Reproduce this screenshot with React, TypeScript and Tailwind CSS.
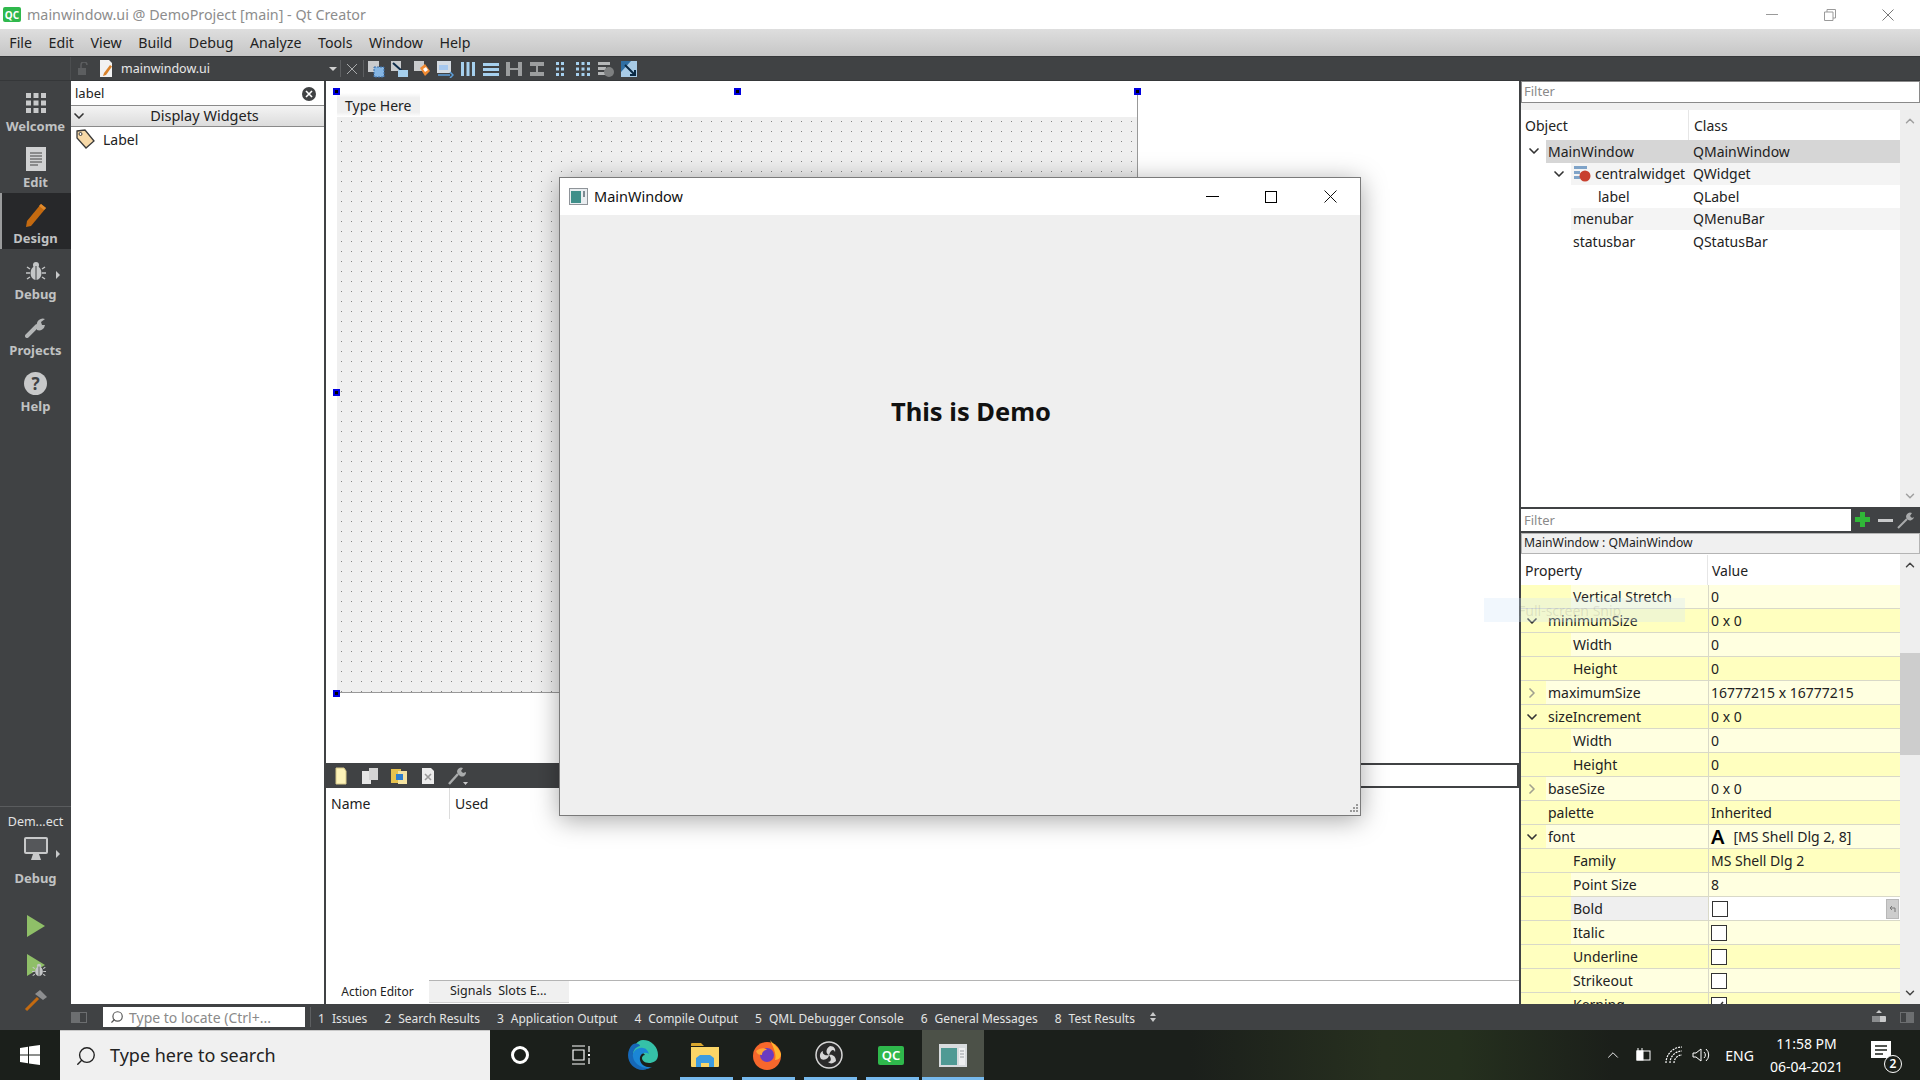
import { ChevronDown, ChevronRight, ChevronUp, Search } from "lucide-react";
import type { ReactNode } from "react";

const menus = ["File", "Edit", "View", "Build", "Debug", "Analyze", "Tools", "Window", "Help"];

const objectRows = [
  { name: "MainWindow", cls: "QMainWindow", left: 27, tone: "bg-[#d6d6d6]", from: 25, arrow: 5 },
  { name: "centralwidget", cls: "QWidget", left: 74, tone: "bg-[#f4f4f4]", from: 50, arrow: 30, icon: true },
  { name: "label", cls: "QLabel", left: 77, tone: "bg-white", from: 50 },
  { name: "menubar", cls: "QMenuBar", left: 52, tone: "bg-[#f4f4f4]", from: 50 },
  { name: "statusbar", cls: "QStatusBar", left: 52, tone: "bg-white", from: 50 },
];

type PropRow = {
  name: string;
  value?: string;
  child?: boolean;
  open?: boolean;
  closed?: boolean;
  check?: boolean;
  checked?: boolean;
  font?: boolean;
  edit?: boolean;
};

const propRows: PropRow[] = [
  { name: "Vertical Stretch", value: "0", child: true },
  { name: "minimumSize", value: "0 x 0", open: true },
  { name: "Width", value: "0", child: true },
  { name: "Height", value: "0", child: true },
  { name: "maximumSize", value: "16777215 x 16777215", closed: true },
  { name: "sizeIncrement", value: "0 x 0", open: true },
  { name: "Width", value: "0", child: true },
  { name: "Height", value: "0", child: true },
  { name: "baseSize", value: "0 x 0", closed: true },
  { name: "palette", value: "Inherited" },
  { name: "font", value: "[MS Shell Dlg 2, 8]", open: true, font: true },
  { name: "Family", value: "MS Shell Dlg 2", child: true },
  { name: "Point Size", value: "8", child: true },
  { name: "Bold", child: true, check: true, edit: true },
  { name: "Italic", child: true, check: true },
  { name: "Underline", child: true, check: true },
  { name: "Strikeout", child: true, check: true },
  { name: "Kerning", child: true, check: true, checked: true },
];

const outputs = [
  ["1", "Issues"],
  ["2", "Search Results"],
  ["3", "Application Output"],
  ["4", "Compile Output"],
  ["5", "QML Debugger Console"],
  ["6", "General Messages"],
  ["8", "Test Results"],
];

function Bug({ size = 20 }: { size?: number }) {
  return (
    <svg width={size} height={size} viewBox="0 0 20 20" fill="#c4c6c7">
      <ellipse cx="10" cy="12" rx="5.5" ry="7" />
      <circle cx="10" cy="4" r="3" />
      <path d="M10 5v14" stroke="#404244" strokeWidth="1" />
      <path d="M4 8 1 6M4 12H0M4 16l-3 2M16 8l3-2M16 12h4M16 16l3 2" stroke="#c4c6c7" strokeWidth="1.5" />
    </svg>
  );
}

function NavItem({ label, active, children }: { label: string; active?: boolean; children: ReactNode }) {
  return (
    <div className={`relative flex h-14 flex-col items-center ${active ? "bg-[#27282a]" : ""}`}>
      {active && <div className="absolute inset-y-0 left-0 w-[2px] bg-[#9a9b9c]" />}
      <div className="flex h-[36px] items-center justify-center pt-[8px]">{children}</div>
      <span className="text-[13px] leading-[18px] font-bold text-[#c0c2c3]">{label}</span>
    </div>
  );
}

function Sidebar() {
  return (
    <div className="flex w-[71px] shrink-0 flex-col bg-[#404244]">
      <NavItem label="Welcome">
        <svg width="20" height="20" viewBox="0 0 20 20" fill="#c8c9ca">
          <path d="M0 0h5v5H0zM7.5 0h5v5h-5zM15 0h5v5h-5zM0 7.5h5v5H0zM7.5 7.5h5v5h-5zM15 7.5h5v5h-5zM0 15h5v5H0zM7.5 15h5v5h-5zM15 15h5v5h-5z" />
        </svg>
      </NavItem>
      <NavItem label="Edit">
        <svg width="20" height="24" viewBox="0 0 20 24">
          <rect width="20" height="24" fill="#d0d1d2" />
          <path d="M4 6h12M4 9h12M4 12h12M4 15h12M4 18h8" stroke="#444" strokeWidth="1" />
        </svg>
      </NavItem>
      <NavItem label="Design" active>
        <svg width="22" height="26" viewBox="0 0 22 26">
          <path d="M16 2 21 6 6 24 1 25 2 19Z" fill="#c46a10" />
          <path d="M16 2 21 6 19 8 14 4Z" fill="#e08a2c" />
        </svg>
      </NavItem>
      <NavItem label="Debug">
        <div className="relative">
          <Bug />
          <div className="absolute top-[10px] left-[30px] h-0 w-0 border-y-[4px] border-l-[4px] border-y-transparent border-l-[#c8c9ca]" />
        </div>
      </NavItem>
      <NavItem label="Projects">
        <svg width="22" height="22" viewBox="0 0 22 22">
          <path d="M2 20 12 10" stroke="#b4b6b7" strokeWidth="4" strokeLinecap="round" />
          <path d="M12 10a6 6 0 0 1 8-7l-4 3 1 3 3 0a6 6 0 0 1-8 5Z" fill="#b4b6b7" />
        </svg>
      </NavItem>
      <NavItem label="Help">
        <div className="flex h-[23px] w-[23px] items-center justify-center rounded-full bg-[#c8c9ca] text-[17px] leading-none font-bold text-[#404244]">?</div>
      </NavItem>

      <div className="mt-auto border-t border-[#5a5c5e] pt-[6px] pb-[18px]">
        <div className="text-center text-[12.5px] leading-[18px] text-[#e2e3e3]">Dem...ect</div>
        <div className="relative mt-[6px] flex justify-center">
          <svg width="24" height="25" viewBox="0 0 24 25">
            <rect x="0" y="0" width="24" height="17" rx="2" fill="#c8c9ca" />
            <rect x="2" y="2" width="20" height="13" fill="#55575a" />
            <path d="M9 17h6l2 6H7Z" fill="#c8c9ca" />
          </svg>
          <div className="absolute top-[13px] left-[56px] h-0 w-0 border-y-[4px] border-l-[4px] border-y-transparent border-l-[#c8c9ca]" />
        </div>
        <div className="mt-[7px] text-center text-[13px] leading-[18px] font-bold text-[#c0c2c3]">Debug</div>
        <div className="mt-[27px] flex justify-center">
          <svg width="20" height="24" viewBox="0 0 20 24"><path d="M1 1 19 12 1 23Z" fill="#8fbf68" /></svg>
        </div>
        <div className="relative mt-[15px] flex justify-center">
          <svg width="20" height="24" viewBox="0 0 20 24"><path d="M1 1 19 12 1 23Z" fill="#8fbf68" /></svg>
          <div className="absolute top-[10px] left-[32px]"><Bug size={14} /></div>
        </div>
        <div className="mt-[11px] flex justify-center">
          <svg width="24" height="24" viewBox="0 0 24 24">
            <path d="M2 22 14 10" stroke="#c46a10" strokeWidth="3" />
            <path d="M11 6 16 2 23 9 19 12Z" fill="#8d8e90" />
          </svg>
        </div>
      </div>
    </div>
  );
}

function ToolIcon({ kind }: { kind: number }) {
  const box = "#c9cbcd";
  const blue = "#a6d0ee";
  return (
    <div className="flex w-[23px] shrink-0 justify-center">
      <svg width="18" height="18" viewBox="0 0 18 18">
        {kind === 0 && (
          <>
            <rect x="1" y="1" width="11" height="11" fill={box} />
            <rect x="7" y="7" width="10" height="10" fill="#85b6e4" stroke="#3d6fa8" strokeDasharray="2 1" />
          </>
        )}
        {kind === 1 && (
          <>
            <rect x="1" y="1" width="10" height="10" fill={box} />
            <path d="M3 3 12 11" stroke="#0d2c4a" strokeWidth="2" />
            <rect x="8" y="10" width="10" height="7" fill={blue} />
          </>
        )}
        {kind === 2 && (
          <>
            <rect x="1" y="1" width="10" height="10" fill={box} />
            <path d="M7 8 12 4 17 11 12 16Z" fill="#f28b32" />
            <path d="M10 9l3-2 2 3-3 2Z" fill="#fff" />
          </>
        )}
        {kind === 3 && (
          <>
            <rect x="1" y="1" width="14" height="12" fill="#d4dbe2" />
            <rect x="3" y="5" width="9" height="5" fill="#a6c8ee" />
            <path d="M2 15h12M14 12l3 3-3 3" stroke="#5da0dc" strokeWidth="1.5" fill="none" />
          </>
        )}
        {kind === 4 && <path d="M2 2h3v14H2zM7.5 2h3v14h-3zM13 2h3v14h-3z" fill={blue} />}
        {kind === 5 && <path d="M1 3h16v3H1zM1 8h16v3H1zM1 13h16v3H1z" fill={blue} />}
        {kind === 6 && <path d="M1 2h4v14H1zM13 2h4v14h-4zM5 8h8v2H5z" fill="#9c9e9f" />}
        {kind === 7 && <path d="M2 2h14v4H2zM2 12h14v4H2zM8 6h2v6H8z" fill="#9c9e9f" />}
        {kind === 8 && <path d="M5 2h3v3H5zM10 2h3v3h-3zM5 7.5h3v3H5zM10 7.5h3v3h-3zM5 13h3v3H5zM10 13h3v3h-3z" fill={blue} />}
        {kind === 9 && <path d="M2 2h3v3H2zM7.5 2h3v3h-3zM13 2h3v3h-3zM2 7.5h3v3H2zM7.5 7.5h3v3h-3zM13 7.5h3v3h-3zM2 13h3v3H2zM7.5 13h3v3h-3zM13 13h3v3h-3z" fill={blue} />}
        {kind === 10 && (
          <>
            <path d="M1 2h12v3H1zM1 7h8v3H1zM1 12h8v3H1z" fill="#b5b7b8" />
            <circle cx="12" cy="12" r="5" fill="#7e8081" />
          </>
        )}
        {kind === 11 && (
          <>
            <rect x="1" y="1" width="16" height="16" fill="#a8cbe6" />
            <path d="M1 1h10L1 12Z" fill="#2f6fa4" />
            <path d="M5 5 15 15M15 10v5h-5" stroke="#0b2a44" strokeWidth="2" fill="none" />
          </>
        )}
      </svg>
    </div>
  );
}

function Toolbar() {
  return (
    <div className="flex h-[25px] shrink-0 items-center border-y border-[#353739] bg-[#404244]">
      <div className="h-full w-[71px] shrink-0 border-r border-[#4c4e50]" />
      <div className="flex w-[24px] justify-center">
        <svg width="12" height="14" viewBox="0 0 12 14">
          <rect x="1" y="6" width="8" height="7" fill="#5c5e60" />
          <path d="M4 6V3a3 3 0 0 1 6 0" stroke="#5c5e60" strokeWidth="1.5" fill="none" />
        </svg>
      </div>
      <svg width="14" height="17" viewBox="0 0 14 17" className="ml-[4px]">
        <path d="M1 0h9l3 3v14H1Z" fill="#f2f2f2" />
        <path d="M5 13 11 5l2 1.5L7 15l-3 1Z" fill="#d9822b" />
      </svg>
      <span className="mt-[2px] ml-[8px] text-[12.5px] leading-none text-[#e8e8e8]">mainwindow.ui</span>
      <div className="ml-[119px] h-0 w-0 border-x-[4px] border-t-[4px] border-x-transparent border-t-[#d0d0d0]" />
      <div className="ml-[3px] h-[17px] w-px bg-[#5d5f61]" />
      <svg width="12" height="12" viewBox="0 0 12 12" className="ml-[5px]">
        <path d="M1 1l10 10M11 1 1 11" stroke="#a9abac" strokeWidth="1" />
      </svg>
      <div className="ml-[5px] h-[17px] w-px bg-[#5d5f61]" />
      <div className="flex">
        {[0, 1, 2, 3, 4, 5, 6, 7, 8, 9, 10, 11].map((kind) => (
          <ToolIcon key={kind} kind={kind} />
        ))}
      </div>
    </div>
  );
}

function WidgetBox() {
  return (
    <div className="flex w-[255px] shrink-0 flex-col border-r-2 border-[#404244] bg-white">
      <div className="mt-[2px] flex h-[22px] items-center justify-between pr-[8px] pl-[4px]">
        <span className="text-[13px] text-[#222]">label</span>
        <div className="flex h-[14px] w-[14px] items-center justify-center rounded-full bg-[#404244]">
          <svg width="8" height="8" viewBox="0 0 8 8"><path d="M1 1l6 6M7 1 1 7" stroke="#fff" strokeWidth="1.6" /></svg>
        </div>
      </div>
      <div className="relative flex h-[22px] items-center justify-center border-y border-[#8a8a8a] bg-[linear-gradient(#f4f4f4,#dcdcdc)] pl-[14px] text-[14.5px] text-[#222]">
        <ChevronDown className="absolute left-[0px] text-[#333]" size={16} strokeWidth={2.5} />
        Display Widgets
      </div>
      <div className="flex h-[24px] items-center pl-[3px] text-[14px] text-[#222]">
        <svg width="22" height="22" viewBox="0 0 22 22">
          <path d="M3 3 11 2 20 13 12 20 3 10Z" fill="#f7d9a8" stroke="#3a3a3a" strokeWidth="1.3" />
          <circle cx="6.5" cy="6" r="1.5" fill="#fff" stroke="#3a3a3a" />
        </svg>
        <span className="ml-[7px]">Label</span>
      </div>
    </div>
  );
}

function Handle({ className }: { className: string }) {
  return <div className={`absolute h-[7px] w-[7px] border-2 border-[#0000e0] bg-black ${className}`} />;
}

function ActionIcons() {
  return (
    <div className="flex items-center gap-[9px] pl-[5px]">
      <svg width="20" height="20" viewBox="0 0 20 20"><path d="M5 2h8l2 3v13H5Z" fill="#fdf3b8" stroke="#d6c88a" /></svg>
      <svg width="20" height="20" viewBox="0 0 20 20"><path d="M2 5h9v13H2Z" fill="#e6e6e6" /><path d="M9 2h9v12H9Z" fill="#d4d4d4" /></svg>
      <svg width="20" height="20" viewBox="0 0 20 20"><path d="M2 3h10v14H2Z" fill="#e8c34e" /><path d="M9 5h9v13H9Z" fill="#f4e3a1" /><rect x="7" y="8" width="7" height="6" fill="#2f7fd0" /></svg>
      <svg width="20" height="20" viewBox="0 0 20 20"><path d="M4 2h9l3 3v13H4Z" fill="#ececec" /><path d="M7 8l6 6M13 8l-6 6" stroke="#999" strokeWidth="1.6" /></svg>
      <svg width="22" height="20" viewBox="0 0 22 20">
        <path d="M2 18 11 8" stroke="#a9abac" strokeWidth="2.5" />
        <path d="M11 8a4 4 0 0 1 5-6l-2 3 2 2 3-1a4 4 0 0 1-6 4Z" fill="#a9abac" />
        <path d="M16 16h5l-2.5 3Z" fill="#c8c9ca" />
      </svg>
    </div>
  );
}

function Designer() {
  return (
    <div className="relative flex min-w-0 flex-1 flex-col bg-white">
      <div className="relative h-[682px] shrink-0 pt-[12px] pl-[11px]">
        <div className="h-[600px] w-[801px] border-r border-b border-[#999]">
          <div className="flex h-[24px] w-[83px] items-center bg-[linear-gradient(#ffffff,#efefef_20%,#efefef_80%,#ffffff)] pl-[8px] text-[14px] text-[#222]">Type Here</div>
          <div className="h-[575px] bg-[#efefef] bg-[radial-gradient(circle_at_4.5px_4.5px,#858585_0.5px,transparent_0.6px)] bg-[length:10px_10px]" />
        </div>
        <Handle className="top-[7px] left-[7px]" />
        <Handle className="top-[7px] left-[408px]" />
        <Handle className="top-[7px] left-[808px]" />
        <Handle className="top-[308px] left-[7px]" />
        <Handle className="top-[609px] left-[7px]" />
      </div>
      <div className="flex h-[25px] shrink-0 items-center bg-[#404244]">
        <ActionIcons />
        <div className="ml-auto h-full w-[400px] border-y-2 border-r-2 border-[#404244] bg-white" />
      </div>
      <div className="flex h-[31px] shrink-0 text-[14px] text-[#222]">
        <div className="flex w-[124px] items-center border-r border-[#dcdcdc] pl-[5px]">Name</div>
        <div className="flex items-center pl-[5px]">Used</div>
      </div>
      <div className="flex-1" />
      <div className="flex h-[24px] shrink-0 border-t border-[#b4b4b4] text-[13px] text-[#222]">
        <div className="-mt-px flex w-[103px] items-center justify-center bg-white text-[12px]">Action Editor</div>
        <div className="flex h-[22px] w-[140px] items-center border-b border-[#d0d0d0] bg-[#f0f0f0] pl-[21px] text-[12.5px]">Signals&nbsp;&nbsp;Slots E...</div>
      </div>
    </div>
  );
}

function FloatingWindow() {
  return (
    <div className="absolute top-[96px] left-[488px] flex h-[639px] w-[802px] flex-col border border-[#7a7a7a] bg-[#efefef] shadow-[0_4px_24px_rgba(0,0,0,0.35)]">
      <div className="flex h-[37px] shrink-0 items-center bg-white pl-[9px]">
        <svg width="19" height="17" viewBox="0 0 19 17">
          <rect x="0.5" y="0.5" width="18" height="16" fill="#e9edf0" stroke="#8f9499" />
          <rect x="2" y="3" width="10" height="12" fill="#3f8f8a" />
          <rect x="14" y="3" width="2" height="6" fill="#7d8a92" />
        </svg>
        <span className="ml-[6px] text-[14.5px] text-[#111]">MainWindow</span>
        <div className="ml-auto flex items-center">
          <div className="flex w-[58px] justify-center pr-[6px]"><div className="h-px w-[13px] bg-black" /></div>
          <div className="flex w-[58px] justify-center pr-[5px]"><div className="h-[12px] w-[12px] border border-black" /></div>
          <div className="flex w-[58px] justify-center pr-[2px]">
            <svg width="13" height="13" viewBox="0 0 13 13"><path d="M0.5 0.5l12 12M12.5 0.5l-12 12" stroke="#111" strokeWidth="1" /></svg>
          </div>
        </div>
      </div>
      <div className="relative flex flex-1 items-center justify-center pb-[208px] pl-[22px]">
        <span className="text-[25.5px] font-bold text-[#111]">This is Demo</span>
        <svg width="10" height="10" viewBox="0 0 10 10" className="absolute right-[1px] bottom-[1px]" fill="#9a9a9a">
          <path d="M7 0h2v2H7zM4 3h2v2H4zM7 3h2v2H7zM1 6h2v2H1zM4 6h2v2H4zM7 6h2v2H7z" />
        </svg>
      </div>
    </div>
  );
}

function ScrollTrack({ thumb }: { thumb?: boolean }) {
  return (
    <div className="relative flex w-[20px] shrink-0 flex-col items-center justify-between bg-[#eeeeee] py-[4px] text-[#a0a0a0]">
      <ChevronUp size={14} strokeWidth={2.5} className={thumb ? "text-[#444]" : ""} />
      {thumb && <div className="absolute top-[99px] h-[102px] w-full bg-[#cdcdcd]" />}
      <ChevronDown size={14} strokeWidth={2.5} className={thumb ? "text-[#444]" : ""} />
    </div>
  );
}

function ObjectInspector() {
  return (
    <div className="flex h-[426px] shrink-0 flex-col">
      <div className="flex h-[22px] shrink-0 items-center border border-[#8a8a8a] bg-white pl-[2px] text-[13px] text-[#8a8a8a]">Filter</div>
      <div className="h-[7px] shrink-0 bg-[#f0f0f0]" />
      <div className="flex min-h-0 flex-1">
        <div className="flex-1 bg-white text-[14px] text-[#222]">
          <div className="flex h-[30px] items-center">
            <div className="flex h-full w-[168px] items-center border-r border-[#e6e6e6] pl-[4px]">Object</div>
            <div className="pl-[5px]">Class</div>
          </div>
          {objectRows.map((row) => (
            <div key={row.name} className="relative flex h-[22.5px] items-center">
              <div className={`absolute inset-y-0 right-0 ${row.tone}`} style={{ left: row.from }} />
              {row.arrow !== undefined && (
                <ChevronDown className="absolute text-[#333]" style={{ left: row.arrow }} size={16} strokeWidth={2.5} />
              )}
              {row.icon && (
                <svg width="17" height="17" viewBox="0 0 17 17" className="absolute left-[53px]">
                  <path d="M0 1h13v3H0zM0 6h6v3H0zM0 11h6v3H0z" fill="#7fa3c8" />
                  <circle cx="11" cy="11" r="5.5" fill="#c8402f" />
                </svg>
              )}
              <span className="absolute" style={{ left: row.left }}>{row.name}</span>
              <span className="absolute left-[172px]">{row.cls}</span>
            </div>
          ))}
        </div>
        <ScrollTrack />
      </div>
    </div>
  );
}

function PropertyRow({ row, index }: { row: PropRow; index: number }) {
  const light = index % 2 === 0;
  const base = row.edit ? "bg-white" : light ? "bg-[#ffffe0]" : "bg-[#ffffbf]";
  const name = row.edit ? "bg-[#efefef]" : base;
  return (
    <div className="flex h-6 shrink-0 border-b border-[#d9d9c8] text-[14px] text-[#222]">
      <div className="flex w-[187px] shrink-0 bg-[#ffffbf]">
        <div className={`flex h-full shrink-0 items-center ${row.child ? "w-[50px]" : "w-[25px]"}`}>
          {row.open && <ChevronDown className="ml-[3px] text-[#333]" size={16} strokeWidth={2.5} />}
          {row.closed && <ChevronRight className="ml-[3px] text-[#a0a090]" size={16} strokeWidth={2.5} />}
        </div>
        <div className={`flex min-w-0 flex-1 items-center pl-[2px] ${name}`}>{row.name}</div>
      </div>
      <div className={`relative flex flex-1 items-center border-l border-[#d9d9c8] pl-[2px] ${base}`}>
        {row.font && <span className="mr-[9px] text-[20px] leading-none font-semibold text-black">A</span>}
        {row.check ? (
          <div className={`flex h-4 w-4 items-center justify-center border border-[#333] bg-white ${row.edit ? "ml-px" : ""}`}>
            {row.checked && (
              <svg width="12" height="12" viewBox="0 0 12 12"><path d="M2 6l3 3 5-6" stroke="#333" strokeWidth="1.5" fill="none" /></svg>
            )}
          </div>
        ) : (
          row.value
        )}
        {row.edit && (
          <div className="absolute right-[1px] flex h-5 w-[13px] items-center justify-center border border-[#b8b8b8] bg-[#cdcdcd] text-[#777]">
            <svg width="8" height="8" viewBox="0 0 8 8"><path d="M1 3h5v4M1 3l2-2M1 3l2 2" stroke="#777" fill="none" /></svg>
          </div>
        )}
      </div>
    </div>
  );
}

function PropertyEditor() {
  return (
    <div className="flex min-h-0 flex-1 flex-col overflow-hidden">
      <div className="flex h-[26px] shrink-0 items-center border-y-2 border-[#404244] bg-[#404244]">
        <div className="flex h-full w-[330px] items-center bg-white pt-[2px] pl-[3px] text-[13px] text-[#8a8a8a]">Filter</div>
        <svg width="18" height="18" viewBox="0 0 18 18" className="ml-[3px]">
          <path d="M6 1h5v5h5v5h-5v5H6v-5H1V6h5Z" fill="#30b838" />
        </svg>
        <div className="ml-[6px] h-[3px] w-[15px] bg-[#c8c9ca]" />
        <svg width="18" height="18" viewBox="0 0 18 18" className="ml-[4px]">
          <path d="M1 17 10 8" stroke="#a9abac" strokeWidth="2" />
          <path d="M10 8a4 4 0 0 1 5-6l-2 3 2 2 2-1a4 4 0 0 1-7 2Z" fill="#a9abac" />
        </svg>
      </div>
      <div className="flex h-[21px] shrink-0 items-center border border-[#b4b4b4] bg-[#f0f0f0] pl-[2px] text-[12.2px] text-[#222]">MainWindow : QMainWindow</div>
      <div className="flex min-h-0 flex-1">
        <div className="flex flex-1 flex-col overflow-hidden bg-white">
          <div className="flex h-[31px] shrink-0 pt-px text-[14px] text-[#222]">
            <div className="flex w-[187px] items-center border-r border-[#e6e6e6] pl-[4px]">Property</div>
            <div className="flex items-center pl-[4px]">Value</div>
          </div>
          {propRows.map((row, i) => (
            <PropertyRow key={`${row.name}-${i}`} row={row} index={i} />
          ))}
        </div>
        <ScrollTrack thumb />
      </div>
    </div>
  );
}

function StatusBar() {
  return (
    <div className="flex h-[26px] shrink-0 items-center bg-[#404244] text-[12px] text-[#e4e5e5]">
      <div className="flex w-[32px] shrink-0 justify-end pr-[16px]">
        <div className="flex h-[11px] w-[16px] border border-[#6c6e70]"><div className="w-[8px] bg-[#6c6e70]" /></div>
      </div>
      <div className="flex h-[20px] w-[202px] shrink-0 items-center bg-white pl-[7px] text-[#8a8a8a]">
        <Search size={14} className="mr-[5px] -scale-x-100 text-[#555]" />
        <span className="text-[14px]">Type to locate (Ctrl+...</span>
      </div>
      <div className="ml-[5px] h-[20px] w-px bg-[#5d5f61]" />
      <div className="ml-[7px] flex gap-[17px] pt-[3px]">
        {outputs.map(([num, label]) => (
          <span key={num} className="flex gap-[7px] whitespace-nowrap">
            <span>{num}</span>
            <span>{label}</span>
          </span>
        ))}
      </div>
      <div className="ml-[15px] flex flex-col gap-[2px]">
        <div className="h-0 w-0 border-x-[3px] border-b-[4px] border-x-transparent border-b-[#c8c9ca]" />
        <div className="h-0 w-0 border-x-[3px] border-t-[4px] border-x-transparent border-t-[#c8c9ca]" />
      </div>
      <div className="mr-[6px] ml-auto flex items-center gap-[13px]">
        <svg width="16" height="14" viewBox="0 0 16 14">
          <path d="M8 0l3 3H5Z" fill="#c8c9ca" />
          <rect x="1" y="6" width="14" height="6" rx="1" fill="#c8c9ca" />
          <rect x="1" y="6" width="8" height="6" fill="#8a8c8e" />
        </svg>
        <div className="flex h-[11px] w-[14px] justify-end border border-[#6c6e70]"><div className="w-[7px] bg-[#6c6e70]" /></div>
      </div>
    </div>
  );
}

function TaskCell({ children, width = "w-[62px]", open, active }: { children: ReactNode; width?: string; open?: boolean; active?: boolean }) {
  return (
    <div className={`relative flex h-full shrink-0 items-center justify-center ${width} ${active ? "bg-[#4c5148]" : ""}`}>
      {children}
      {open && <div className={`absolute bottom-0 h-[3px] bg-[#76b9ed] ${active ? "right-0 left-0" : "right-[3px] left-[6px]"}`} />}
    </div>
  );
}

function Taskbar() {
  return (
    <div className="flex h-[50px] shrink-0 items-center bg-[linear-gradient(90deg,#1b1f1b_0%,#1b1f1b_62%,#27301f_72%,#25301e_76%,#1b1f1a_84%)] text-white">
      <div className="flex h-full w-[60px] shrink-0 items-center justify-center">
        <svg width="20" height="20" viewBox="0 0 20 20" fill="#fff">
          <path d="M0 3l8-1.2V9.5H0ZM9 1.6 20 0v9.5H9ZM0 10.5h8v7.7L0 17ZM9 10.5h11V20L9 18.4Z" />
        </svg>
      </div>
      <div className="flex h-full w-[430px] shrink-0 items-center border-t border-[#c8c8c8] bg-[#f0f0f0] pl-[15px] text-[#222]">
        <Search size={22} strokeWidth={1.5} className="-scale-x-100" />
        <span className="ml-[13px] text-[18px]">Type here to search</span>
      </div>
      <TaskCell width="w-[60px]">
        <div className="h-[18px] w-[18px] rounded-full border-[3px] border-white" />
      </TaskCell>
      <TaskCell>
        <svg width="20" height="20" viewBox="0 0 20 20" fill="none" stroke="#fff" strokeWidth="1.2">
          <path d="M1 1h13M1 19h13M2 5h11v10H2zM18 1v6M18 13v6" />
          <rect x="17" y="9" width="2" height="2" fill="#fff" stroke="none" />
        </svg>
      </TaskCell>
      <TaskCell>
        <svg width="30" height="30" viewBox="0 0 30 30">
          <path d="M15 0a15 15 0 0 1 15 15c0 6-5 8-9 8-5 0-7-3-7-5 0-1 1-3 3-3-3-4-10-3-13 3C5 6 9 0 15 0Z" fill="#35c1a8" />
          <path d="M4 18c0-7 6-11 11-10 3 0 5 3 6 6-4-3-10 0-9 6 1 5 6 8 12 7-8 5-20-1-20-9Z" fill="#1b86d6" />
          <path d="M0 15c0-4 2-8 4-10 4-3 8-1 8 1-5 1-8 6-7 11 1 6 7 11 15 11-1 1-3 2-5 2C6 30 0 23 0 15Z" fill="#1668b8" />
        </svg>
      </TaskCell>
      <TaskCell open>
        <svg width="28" height="24" viewBox="0 0 28 24">
          <path d="M0 1a1 1 0 0 1 1-1h9l3 3H0Z" fill="#d9a62e" />
          <path d="M0 4h28v19a1 1 0 0 1-1 1H1a1 1 0 0 1-1-1Z" fill="#fbd567" />
          <path d="M5 24V15l4-3h10l4 3v9h-5v-4h-8v4Z" fill="#3d9be0" />
        </svg>
      </TaskCell>
      <TaskCell open>
        <svg width="28" height="30" viewBox="0 0 28 30">
          <circle cx="14" cy="16" r="14" fill="#f7672c" />
          <path d="M17 0c3 4 9 7 11 14 0 3-2 6-6 6 2-5-2-14-5-20Z" fill="#ffb52e" />
          <circle cx="14" cy="15" r="7" fill="#6a3cc0" />
          <path d="M3 11c3-3 9-4 11-1-3 0-5 2-5 5-3 0-5-1-6-4Z" fill="#ffa436" />
        </svg>
      </TaskCell>
      <TaskCell open>
        <svg width="28" height="28" viewBox="0 0 28 28" fill="none">
          <circle cx="14" cy="14" r="13" stroke="#d6d6d6" strokeWidth="1.5" fill="#2a2a2a" />
          <path d="M14 14c-3-1-4-6 1-9 4 0 6 3 5 6-1-3-4-3-6 3ZM14 14c3-1 7 1 7 6-3 3-6 3-8 1 3 0 4-3 1-7ZM14 14c0 3-4 6-8 4-2-3-1-7 2-8-1 3 2 5 6 4Z" fill="#d6d6d6" />
        </svg>
      </TaskCell>
      <TaskCell open>
        <div className="flex h-[19px] w-[26px] items-center justify-center rounded-[2px] bg-[#2fb84c] text-[13px] leading-none font-semibold text-white">QC</div>
      </TaskCell>
      <TaskCell open active>
        <svg width="28" height="23" viewBox="0 0 28 23">
          <rect width="28" height="23" fill="#d8dcde" />
          <rect x="2" y="4" width="16" height="17" fill="#4f9a94" />
          <rect x="20" y="4" width="6" height="17" fill="#eef0f1" />
          <path d="M21 7h4M21 10h4M21 13h4" stroke="#9aa0a4" />
        </svg>
      </TaskCell>
      <div className="ml-auto flex items-center pr-[18px]">
        <ChevronUp size={18} strokeWidth={1.2} className="mr-[12px]" />
        <svg width="18" height="16" viewBox="0 0 18 16" className="mr-[13px]" fill="none" stroke="#fff">
          <rect x="3" y="4" width="13" height="9" />
          <rect x="3" y="4" width="6" height="9" fill="#fff" />
          <path d="M4 1v3M8 1v3" />
        </svg>
        <svg width="18" height="18" viewBox="0 0 18 18" className="mr-[9px]" fill="none" stroke="#fff" strokeWidth="1.2">
          <path d="M1 17A16 16 0 0 1 17 1M5 17A12 12 0 0 1 17 5M9 17a8 8 0 0 1 8-8" strokeDasharray="2 1" />
        </svg>
        <svg width="18" height="18" viewBox="0 0 18 18" className="mr-[15px]" fill="none" stroke="#fff">
          <path d="M1 7h3l5-4v12l-5-4H1ZM12 6a4 4 0 0 1 0 6M14 3a8 8 0 0 1 0 12" />
        </svg>
        <span className="mr-[16px] text-[14px]">ENG</span>
        <div className="mr-[27px] flex flex-col items-center text-[14px] leading-[23px]">
          <span>11:58 PM</span>
          <span>06-04-2021</span>
        </div>
        <div className="relative mr-[4px] h-[30px] w-[28px]">
          <svg width="24" height="24" viewBox="0 0 24 24" fill="#fff" className="absolute top-0 left-0">
            <path d="M1 1h20v17H1Z" />
            <path d="M5 6h12M5 10h12M5 14h8" stroke="#1b1f1a" strokeWidth="1.5" />
          </svg>
          <div className="absolute right-[-4px] bottom-[-3px] flex h-[18px] w-[18px] items-center justify-center rounded-full border border-white bg-[#1b1f1a] text-[12px] leading-none font-semibold">2</div>
        </div>
      </div>
    </div>
  );
}

export default function App() {
  return (
    <div className="flex h-screen w-screen flex-col overflow-hidden bg-white [font-family:'Noto_Sans','Open_Sans',sans-serif]">
      <div className="flex h-[29px] shrink-0 items-center bg-white">
        <div className="ml-[3px] flex h-[15px] w-[18px] items-center justify-center rounded-[2px] bg-[#2fb84c] text-[10px] leading-none font-bold text-white">QC</div>
        <span className="ml-[6px] text-[14.3px] text-[#8d8d8d]">mainwindow.ui @ DemoProject [main] - Qt Creator</span>
        <div className="ml-auto flex items-center pr-[3px] text-[#9a9a9a]">
          <div className="flex w-[58px] justify-center"><div className="h-px w-[12px] bg-[#9a9a9a]" /></div>
          <div className="flex w-[58px] justify-center">
            <svg width="12" height="12" viewBox="0 0 12 12" fill="none" stroke="#9a9a9a"><path d="M0.5 3h8.5v8.5H0.5ZM3 3V0.5h8.5V9H9" /></svg>
          </div>
          <div className="flex w-[58px] justify-center">
            <svg width="12" height="12" viewBox="0 0 12 12"><path d="M0.5 0.5l11 11M11.5 0.5l-11 11" stroke="#777" /></svg>
          </div>
        </div>
      </div>

      <div className="flex h-[27px] shrink-0 items-center bg-[linear-gradient(#dedede,#c6c6c6)] pl-px text-[14.2px] text-[#222]">
        {menus.map((menu) => (
          <span key={menu} className="px-[8.3px]">{menu}</span>
        ))}
      </div>

      <Toolbar />

      <div className="flex min-h-0 flex-1">
        <Sidebar />
        <div className="flex min-w-0 flex-1 flex-col">
          <div className="relative flex min-h-0 flex-1">
            <WidgetBox />
            <Designer />
            <div className="flex w-[401px] shrink-0 flex-col border-l-2 border-[#404244] bg-white">
              <ObjectInspector />
              <PropertyEditor />
            </div>
            <FloatingWindow />
            <div className="absolute top-[517px] left-[1413px] flex h-[24px] w-[201px] items-center bg-[#cfe3f7]/30 pl-[34px] text-[14px] text-[#555]/15">Full-screen Snip</div>
          </div>
          <StatusBar />
        </div>
      </div>

      <Taskbar />
    </div>
  );
}
